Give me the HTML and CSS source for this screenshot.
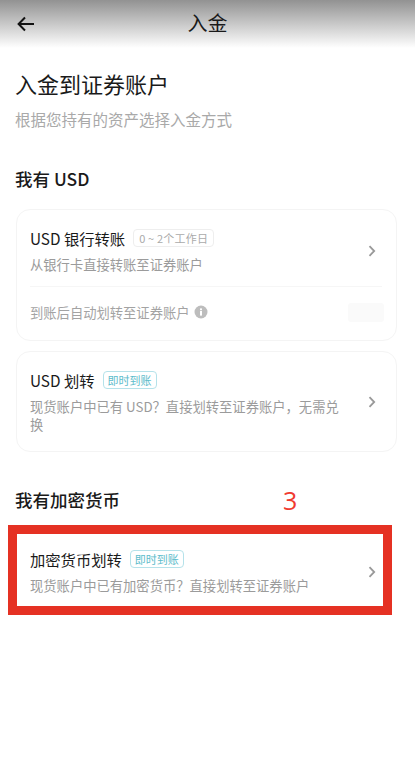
FILE: index.html
```html
<!DOCTYPE html>
<html lang="zh-CN">
<head>
<meta charset="utf-8">
<title>入金</title>
<link rel="stylesheet" href="styles.css">
</head>
<body>
<header class="topbar">
  <svg class="back" viewBox="0 0 18 16" width="18" height="16" aria-hidden="true"><path d="M17 8H2M8 1.5 1.6 8 8 14.5" fill="none" stroke="#111" stroke-width="2"/></svg>
  <div class="topbar-title">入金</div>
</header>
<main class="page">
  <h1 class="page-title">入金到证券账户</h1>
  <p class="page-sub">根据您持有的资产选择入金方式</p>

  <h2 class="section section-usd">我有 USD</h2>
  <section class="card card-bank">
    <div class="row">
      <div class="row-body">
        <div class="row-title"><span>USD 银行转账</span><span class="tag tag-grey">0 ~ 2个工作日</span></div>
        <p class="row-desc">从银行卡直接转账至证券账户</p>
      </div>
      <svg class="chev" viewBox="0 0 8 12" width="8" height="12" aria-hidden="true"><path d="M1.5 1.2 6.2 6 1.5 10.8" fill="none" stroke="#999" stroke-width="1.8"/></svg>
    </div>
    <div class="auto-row">
      <span>到账后自动划转至证券账户</span>
      <svg class="info" viewBox="0 0 14 14" width="14" height="14" aria-hidden="true"><circle cx="7" cy="7" r="6.5" fill="#bdbdbd"/><rect x="6" y="6" width="2" height="4.6" fill="#fff"/><rect x="6" y="3.4" width="2" height="1.8" fill="#fff"/></svg>
      <span class="toggle"></span>
    </div>
  </section>

  <section class="card card-usd">
    <div class="row">
      <div class="row-body">
        <div class="row-title"><span>USD 划转</span><span class="tag tag-teal">即时到账</span></div>
        <p class="row-desc">现货账户中已有 USD？直接划转至证券账户，无需兑换</p>
      </div>
      <svg class="chev" viewBox="0 0 8 12" width="8" height="12" aria-hidden="true"><path d="M1.5 1.2 6.2 6 1.5 10.8" fill="none" stroke="#999" stroke-width="1.8"/></svg>
    </div>
  </section>

  <div class="section-row">
    <h2 class="section">我有加密货币</h2>
    <span class="step">3</span>
  </div>
  <section class="highlight">
    <div class="row">
      <div class="row-body">
        <div class="row-title"><span>加密货币划转</span><span class="tag tag-teal">即时到账</span></div>
        <p class="row-desc">现货账户中已有加密货币？直接划转至证券账户</p>
      </div>
      <svg class="chev" viewBox="0 0 8 12" width="8" height="12" aria-hidden="true"><path d="M1.5 1.2 6.2 6 1.5 10.8" fill="none" stroke="#999" stroke-width="1.8"/></svg>
    </div>
  </section>
</main>
</body>
</html>
```
FILE: styles.css
```css
* { box-sizing: border-box; }
html, body { margin: 0; padding: 0; }
body {
  width: 415px;
  height: 778px;
  overflow: hidden;
  background: #fff;
  color: #1a1a1a;
  font-family: "Noto Sans CJK SC", "Noto Sans", sans-serif;
}
.topbar {
  height: 48px;
  padding-bottom: 2px;
  background: linear-gradient(#929292, #fff);
  display: flex;
  align-items: center;
  justify-content: center;
  position: relative;
}
.back { position: absolute; left: 17px; top: 16px; }
.topbar-title { font-size: 20px; line-height: 28px; color: #1a1a1a; }
.page { padding: 0 18px 0 16px; }
.page-title {
  margin: 20px 0 0 -1px;
  font-size: 22px;
  line-height: 30px;
  font-weight: 400;
}
.page-sub {
  margin: 11px 0 0 -1px;
  font-size: 15.5px;
  line-height: 20px;
  color: #a9a9a9;
}
.section {
  margin: 0 0 0 -1px;
  font-size: 17.5px;
  line-height: 24px;
  font-weight: 500;
}
.section-usd { margin-top: 38px; }
.card {
  margin-top: 18px;
  width: 381px;
  border: 1px solid #f4f4f4;
  border-radius: 14px;
  padding: 0 14px 0 13px;
}
.card-usd { margin-top: 10px; }
.row { display: flex; align-items: center; justify-content: space-between; }
.card-bank > .row { padding-top: 17px; padding-bottom: 12px; }
.card-usd > .row { padding-top: 17px; padding-bottom: 17px; }
.row-body { width: 312px; }
.row-title {
  display: flex;
  align-items: center;
  gap: 8px;
  font-size: 15.3px;
  line-height: 22px;
  color: #1a1a1a;
}
.tag {
  font-size: 11px;
  line-height: 16px;
  height: 18px;
  padding: 0 4px;
  border-radius: 4px;
  border: 1px solid #eee;
  color: #aaa;
}
.tag-grey { padding: 0 5px; letter-spacing: .2px; }
.tag-teal { border-color: #b5e2ea; color: #5dbccb; }
.row-desc {
  margin: 7px 0 0;
  font-size: 13.3px;
  line-height: 18px;
  color: #9b9b9b;
}
.chev { flex: none; margin-right: 6px; margin-left: 20px; }
.auto-row {
  border-top: 1px solid #f6f6f6;
  height: 54px;
  padding-bottom: 3px;
  display: flex;
  align-items: center;
  font-size: 13.3px;
  color: #a3a3a3;
}
.info { margin-left: 4px; }
.toggle {
  margin-left: auto;
  margin-right: -2px;
  width: 36px;
  height: 19px;
  border-radius: 3px;
  background: #fafafa;
}
.section-row {
  display: flex;
  align-items: center;
  margin-top: 36px;
  height: 24px;
}
.step {
  margin-left: 163px;
  font-size: 25px;
  line-height: 30px;
  color: #f03a30;
  font-family: "Open Sans", sans-serif;
  font-weight: 400;
}
.highlight {
  margin: 13px 0 0 -8px;
  width: 384px;
  height: 90px;
  border: 9px solid #e53123;
  padding: 3px 0 0 13px;
  display: flex;
  align-items: center;
}
.highlight .row { width: 100%; }
.highlight .chev { margin-right: 7px; }
.highlight .row-body { width: auto; }
```
